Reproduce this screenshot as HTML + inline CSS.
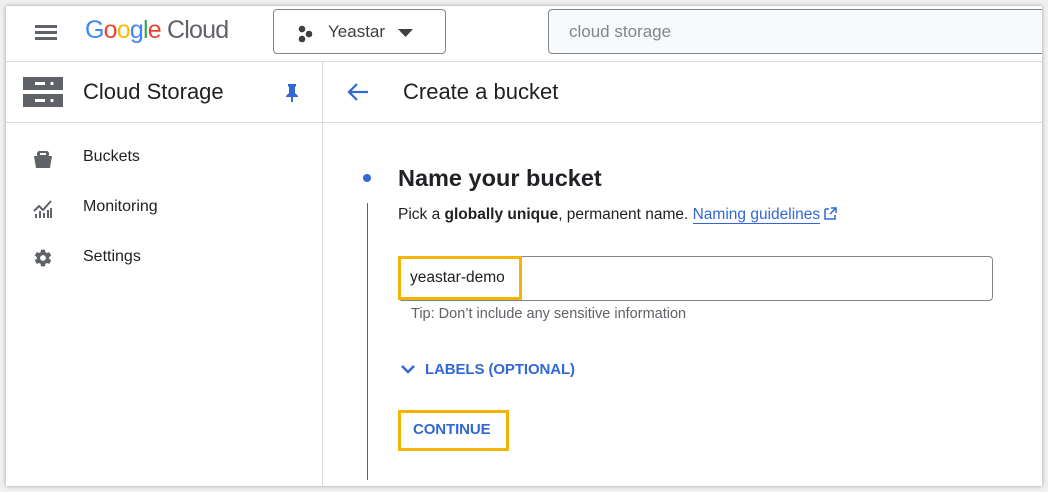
<!DOCTYPE html>
<html><head><style>
*{margin:0;padding:0;box-sizing:border-box}
body{width:1048px;height:492px;background:#f0f0f0;font-family:"Liberation Sans",Roboto,sans-serif;position:relative;overflow:hidden}
.frame{position:absolute;left:6px;top:6px;width:1036px;height:480px;background:#fff;box-shadow:0 0 4px rgba(0,0,0,.35);overflow:hidden}
.a{position:absolute}
.hl{position:absolute;background:#dadce0;height:1px}
</style></head><body>
<div class="frame"></div>
<!-- header -->
<div class="a" style="left:35px;top:25px;width:22px;height:3px;background:#5f6368;box-shadow:0 6px 0 #5f6368,0 12px 0 #5f6368"></div>
<div class="a" style="left:85px;top:16px;font-size:25px;letter-spacing:-0.8px"><span style="color:#4285f4">G</span><span style="color:#ea4335">o</span><span style="color:#fbbc04">o</span><span style="color:#4285f4">g</span><span style="color:#34a853">l</span><span style="color:#ea4335">e</span> <span style="color:#5f6368">Cloud</span></div>
<div class="a" style="left:273px;top:9px;width:173px;height:45px;border:1px solid #80868b;border-radius:4px"></div>
<svg class="a" style="left:297px;top:25px" width="20" height="18"><circle cx="5" cy="4" r="3.3" fill="#3c4043"/><circle cx="12" cy="9" r="3.3" fill="#3c4043"/><circle cx="5" cy="14" r="3.3" fill="#3c4043"/></svg>
<div class="a" style="left:328px;top:22px;font-size:17px;color:#3c4043">Yeastar</div>
<svg class="a" style="left:398px;top:29px" width="16" height="9"><path d="M0 0h15L7.5 8z" fill="#3c4043"/></svg>
<div class="a" style="left:548px;top:9px;width:494px;height:45px;border:1px solid #80868b;border-right:none;border-radius:4px 0 0 4px;background:#f8f9fa"></div>
<div class="a" style="left:569px;top:22px;font-size:17px;color:#80868b">cloud storage</div>
<div class="hl" style="left:6px;top:61px;width:1036px"></div>
<div class="hl" style="left:6px;top:122px;width:1036px"></div>
<div class="a" style="left:322px;top:62px;width:1px;height:424px;background:#dadce0"></div>
<!-- sidebar -->
<svg class="a" style="left:23px;top:77px" width="40" height="30"><rect x="0" y="0" width="40" height="13" fill="#5f6368"/><rect x="0" y="17" width="40" height="13" fill="#5f6368"/><rect x="12" y="5" width="10" height="3" fill="#fff"/><rect x="12" y="22" width="10" height="3" fill="#fff"/><circle cx="29" cy="6.5" r="1.6" fill="#fff"/><circle cx="29" cy="23.5" r="1.6" fill="#fff"/></svg>
<div class="a" style="left:83px;top:79px;font-size:22px;color:#202124">Cloud Storage</div>
<svg class="a" style="left:285px;top:83px" width="14" height="20"><path d="M3 1h8v2l-1 1v6l3 3v1H8v5H6v-5H1v-1l3-3V4L3 3z" fill="#3367d6"/></svg>
<svg class="a" style="left:33px;top:150px" width="20" height="19"><path d="M1 6h18l-2 12H3z" fill="#5f6368"/><rect x="4" y="1" width="12" height="6" rx="2.5" fill="#5f6368"/><rect x="7" y="3" width="6" height="2" fill="#fff"/></svg>
<div class="a" style="left:83px;top:148px;font-size:16px;color:#202124">Buckets</div>
<svg class="a" style="left:33px;top:199px" width="20" height="19"><path d="M1 12l5-5 4 4 8-9" stroke="#5f6368" stroke-width="2" fill="none"/><path d="M2 19v-4h2v4zM6 19v-7h2v7zM10 19v-5h2v5zM14 19v-8h2v8zM17 19V9h2v10z" fill="#5f6368"/></svg>
<div class="a" style="left:83px;top:198px;font-size:16px;color:#202124">Monitoring</div>
<svg class="a" style="left:33px;top:248px" width="20" height="20" viewBox="0 0 24 24"><path fill="#5f6368" d="M19.4 13c.04-.32.1-.66.1-1s-.06-.68-.1-1l2.1-1.650c.2-.15.24-.42.12-.64l-2-3.460c-.12-.22-.39-.3-.61-.22l-2.490 1c-.52-.4-1.080-.73-1.690-.98l-.38-2.650A.49.49 0 0 0 14 2h-4c-.25 0-.46.18-.49.42l-.38 2.650c-.61.25-1.170.59-1.690.98l-2.490-1c-.23-.09-.49 0-.61.22l-2 3.460c-.13.22-.07.49.12.64L4.570 11c-.04.34-.07.67-.07 1s.03.66.07 1l-2.110 1.650c-.19.15-.24.42-.12.64l2 3.460c.12.22.39.3.61.22l2.490-1c.52.4 1.080.73 1.690.98l.38 2.650c.03.24.24.42.49.42h4c.25 0 .46-.18.49-.42l.38-2.650c.61-.25 1.170-.58 1.690-.98l2.490 1c.23.09.49 0 .61-.22l2-3.460c.12-.22.07-.49-.12-.64zM12 15.5A3.5 3.5 0 1 1 12 8.5a3.5 3.5 0 0 1 0 7z"/></svg>
<div class="a" style="left:83px;top:248px;font-size:16px;color:#202124">Settings</div>
<!-- main -->
<svg class="a" style="left:346px;top:82px" width="24" height="20"><path d="M22 10H3M11 2l-8 8 8 8" stroke="#3367d6" stroke-width="2.2" fill="none"/></svg>
<div class="a" style="left:403px;top:79px;font-size:22px;color:#202124">Create a bucket</div>
<div class="a" style="left:363px;top:174px;width:8px;height:8px;border-radius:50%;background:#3367d6"></div>
<div class="a" style="left:367px;top:203px;width:1px;height:277px;background:#5f6368"></div>
<div class="a" style="left:398px;top:165px;font-size:23.5px;font-weight:bold;color:#202124">Name your bucket</div>
<div class="a" style="left:398px;top:206px;font-size:15.5px;color:#202124;white-space:nowrap">Pick a <b>globally unique</b>, permanent name. <span style="color:#3367d6;border-bottom:1px solid #3367d6">Naming guidelines</span> <svg width="13" height="13" style="vertical-align:-1px"><path d="M1 2h4M1 2v10h10V8M7 1h5v5M12 1L6 7" stroke="#3367d6" stroke-width="1.5" fill="none"/></svg></div>
<div class="a" style="left:398px;top:256px;width:595px;height:45px;border:1px solid #80868b;border-radius:4px"></div>
<div class="a" style="left:398px;top:256px;width:124px;height:44px;border:3px solid #f5b400"></div>
<div class="a" style="left:410px;top:269px;font-size:15.5px;color:#202124">yeastar-demo</div>
<div class="a" style="left:411px;top:306px;font-size:14.5px;color:#5f6368;white-space:nowrap">Tip: Don’t include any sensitive information</div>
<svg class="a" style="left:400px;top:364px" width="16" height="11"><path d="M2 2l6 6 6-6" stroke="#3367d6" stroke-width="2.4" fill="none"/></svg>
<div class="a" style="left:425px;top:361px;font-size:15px;font-weight:bold;color:#3367d6;letter-spacing:-0.1px">LABELS (OPTIONAL)</div>
<div class="a" style="left:398px;top:410px;width:111px;height:41px;border:3px solid #f5b400"></div>
<div class="a" style="left:413px;top:421px;font-size:15px;font-weight:bold;color:#3367d6;letter-spacing:-0.1px">CONTINUE</div>
</body></html>
